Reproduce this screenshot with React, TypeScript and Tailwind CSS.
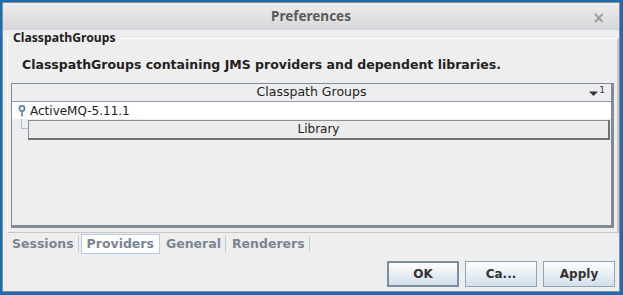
import React from 'react';

const font = "font-['DejaVu_Sans',sans-serif]";

function KeyIcon() {
  return (
    <svg width="8" height="12" viewBox="0 0 8 12" className="shrink-0">
      <circle cx="4" cy="3.5" r="2.6" fill="none" stroke="#5a7fa8" strokeWidth="1.6" />
      <line x1="4" y1="6" x2="4" y2="11.5" stroke="#5a7fa8" strokeWidth="1.6" />
    </svg>
  );
}

function Tab({ label, selected }: { label: string; selected?: boolean }) {
  if (selected) {
    return (
      <div className="h-[20px] px-[5px] flex items-center bg-white border border-[#b3cbe3] text-[#7a8594] font-bold text-[12.5px] leading-none">
        {label}
      </div>
    );
  }
  return (
    <div className="h-[20px] pl-[6px] flex items-center text-[#7a8594] font-bold text-[12.5px] leading-none">
      <span>{label}</span>
      <span className="ml-[4px] w-px h-[16px] bg-[#b8cde2]" />
    </div>
  );
}

function Button({ label, focused }: { label: string; focused?: boolean }) {
  return (
    <button
      className={
        'w-[72px] h-[26px] flex items-center justify-center font-bold text-[12px] text-[#333] bg-gradient-to-b from-[#fefefe] to-[#d3dfeb] ' +
        (focused ? 'border-2 border-[#7b8ea2]' : 'border border-[#93a4b6]')
      }
    >
      {label}
    </button>
  );
}

export default function App() {
  return (
    <div className={`w-[623px] h-[295px] bg-[#1a6cb4] pl-[2px] pt-[2px] pr-[3px] pb-[3px] ${font}`}>
      <div className="h-full flex flex-col bg-[#eeeeee] border border-[#8e8e8e]">
        {/* title bar */}
        <div className="h-[27px] shrink-0 relative flex items-center justify-center bg-gradient-to-b from-[#ededed] to-[#d8d8d8] border-b border-[#c8d6e4]">
          <span className="font-['Noto_Sans',sans-serif] font-bold text-[13.5px] text-[#5a5a5a]">Preferences</span>
          <span className="absolute right-[14px] top-[4px] text-[15px] font-bold text-[#9a9a9a]">×</span>
        </div>

        {/* group */}
        <fieldset className="ml-[4px] w-[610px] h-[203px] border-l border-t border-white border-r-2 border-b border-r-[#c6c6c6] border-b-[#c6c6c6] px-[3px]">
          <legend className="ml-0 px-[2px] font-['Noto_Sans',sans-serif] font-bold text-[12.2px] leading-[16px] text-[#222]">
            ClasspathGroups
          </legend>
          <div className="mt-[11px] ml-[11px] font-bold text-[12.5px] leading-[16px] text-[#222]">
            ClasspathGroups containing JMS providers and dependent libraries.
          </div>

          {/* table */}
          <div className="mt-[10px] w-[603px] border-r-2 border-b-2 border-[#8a8a8a]">
            <div className="h-[143px] border border-[#7d8c9b] flex flex-col">
              <div className="h-[18px] shrink-0 relative flex items-center justify-center border-b border-[#8d9aa8] text-[12.5px] text-[#222]">
                Classpath Groups
                <span className="absolute right-[6px] top-[1px] flex items-start">
                  <svg width="9" height="8" viewBox="0 0 9 8" className="mt-[5px]">
                    <path d="M0 1.5 H9 L4.5 6 Z" fill="#2a3440" />
                  </svg>
                  <span className="ml-[1px] text-[9px] leading-[10px] text-[#3a2a5a]">1</span>
                </span>
              </div>
              <div className="h-[17px] shrink-0 bg-white flex items-center pl-[6px] text-[12px] text-[#222]">
                <KeyIcon />
                <span className="ml-[4px]">ActiveMQ-5.11.1</span>
              </div>
              <div className="h-[21px] shrink-0 flex items-center">
                <div className="w-[16px] h-full flex">
                  <div className="ml-[9px] w-[7px] h-[10px] border-l border-b border-[#a9c2dc]" />
                </div>
                <div className="w-[582px] h-[20px] flex items-center justify-center border border-[#8a8f96] border-b-2 border-r-2 border-b-[#6e737a] border-r-[#6e737a] bg-[#ececec] text-[12px] text-[#222]">
                  Library
                </div>
              </div>
            </div>
          </div>
        </fieldset>

        {/* tabs */}
        <div className="ml-[3px] mt-[1px] flex items-center h-[20px]">
          <Tab label="Sessions" />
          <div className="ml-[2px]">
            <Tab label="Providers" selected />
          </div>
          <Tab label="General" />
          <Tab label="Renderers" />
        </div>

        {/* buttons */}
        <div className="mt-[7px] mr-[4px] flex justify-end gap-[6px]">
          <Button label="OK" focused />
          <Button label="Ca..." />
          <Button label="Apply" />
        </div>
      </div>
    </div>
  );
}
